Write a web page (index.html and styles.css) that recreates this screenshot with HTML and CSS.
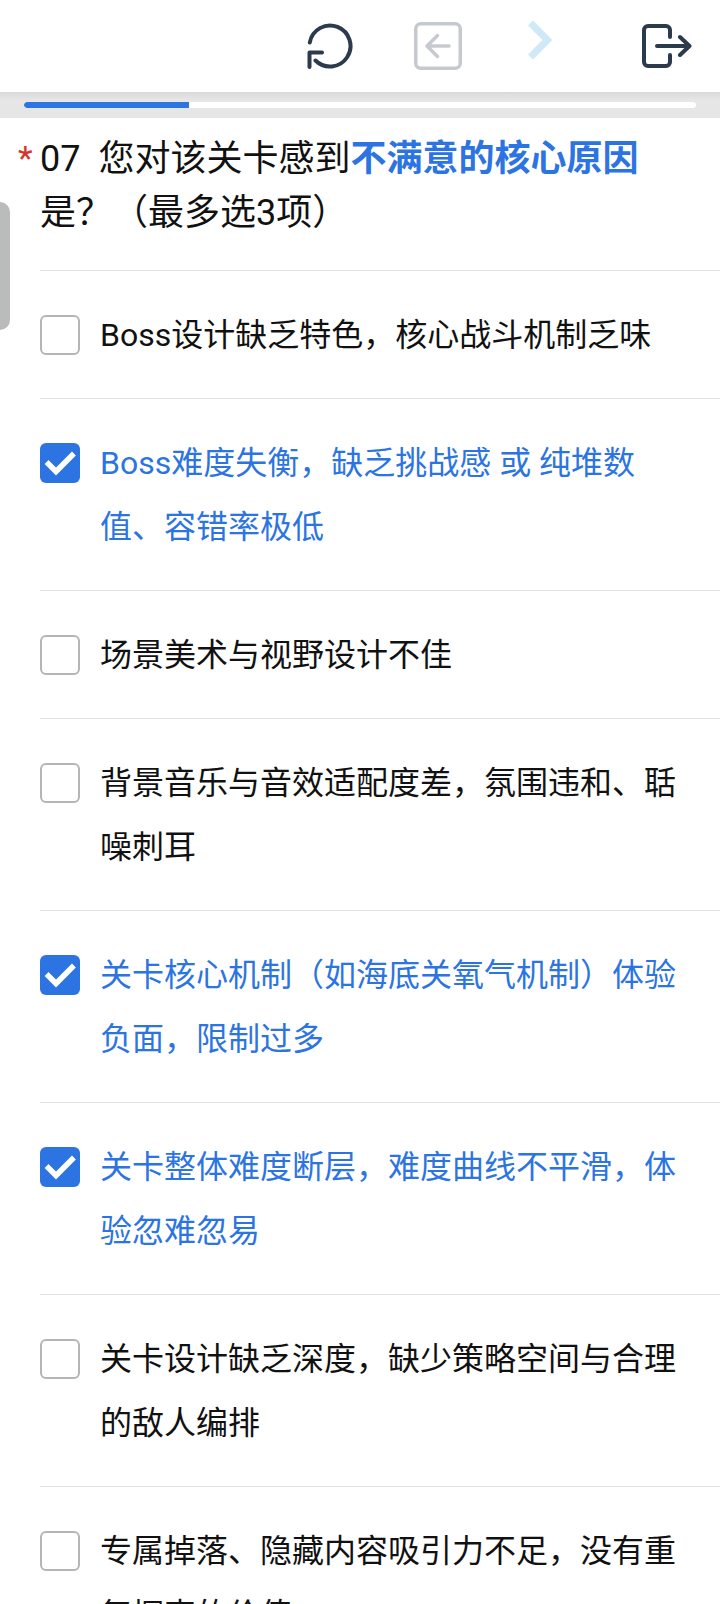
FILE: index.html
```
<!DOCTYPE html>
<html lang="zh">
<head>
<meta charset="utf-8">
<title>问卷</title>
<link rel="stylesheet" href="styles.css">
</head>
<body>
<header class="toolbar">
  <svg class="tool tool-reload" viewBox="0 0 48 48" width="48" height="48"><path d="M3.800 20.500A20.500 20.500 0 1 1 9.500 38.500M3.500 45V30.500H16"/></svg>
  <svg class="tool tool-back" viewBox="0 0 48 48" width="48" height="48"><rect x="1.750" y="1.750" width="44.500" height="44.500" rx="5"/><path d="M35 24H14M23.500 13.500 13 24 23.500 34.500"/></svg>
  <svg class="tool tool-next" viewBox="0 0 28 42" width="28" height="42"><path d="M4.500 4 21.500 21 4.500 38"/></svg>
  <svg class="tool tool-exit" viewBox="0 0 50 48" width="50" height="48"><path d="M28 15V8a4 4 0 0 0-4-4H6a4 4 0 0 0-4 4V40a4 4 0 0 0 4 4H24a4 4 0 0 0 4-4V33M15 24H47.500M38 15l9.500 9-9.500 9"/></svg>
</header>
<div class="progress-band">
  <div class="progress-track"><div class="progress-fill" style="width:24.5%"></div></div>
</div>
<main class="survey">
  <div class="side-handle"></div>
  <h1 class="question"><span class="required">*</span><span class="qno">07</span>您对该关卡感到<strong class="hl">不满意的核心原因</strong>是？（最多选3项）</h1>
  <ul class="options">
    <li class="option"><span class="box"></span><span class="label">Boss设计缺乏特色，核心战斗机制乏味</span></li>
    <li class="option on"><span class="box"><svg viewBox="0 0 40 40" width="40" height="40"><path d="M8.500 21 16 28.500 32 12.500"/></svg></span><span class="label">Boss难度失衡，缺乏挑战感 或 纯堆数值、容错率极低</span></li>
    <li class="option"><span class="box"></span><span class="label">场景美术与视野设计不佳</span></li>
    <li class="option"><span class="box"></span><span class="label">背景音乐与音效适配度差，氛围违和、聒噪刺耳</span></li>
    <li class="option on"><span class="box"><svg viewBox="0 0 40 40" width="40" height="40"><path d="M8.500 21 16 28.500 32 12.500"/></svg></span><span class="label">关卡核心机制（如海底关氧气机制）体验负面，限制过多</span></li>
    <li class="option on"><span class="box"><svg viewBox="0 0 40 40" width="40" height="40"><path d="M8.500 21 16 28.500 32 12.500"/></svg></span><span class="label">关卡整体难度断层，难度曲线不平滑，体验忽难忽易</span></li>
    <li class="option"><span class="box"></span><span class="label">关卡设计缺乏深度，缺少策略空间与合理的敌人编排</span></li>
    <li class="option"><span class="box"></span><span class="label">专属掉落、隐藏内容吸引力不足，没有重复探索的价值</span></li>
  </ul>
</main>
</body>
</html>
```
FILE: styles.css
```
* { box-sizing: border-box; }
html, body { margin: 0; padding: 0; height: 1604px; overflow: hidden; background: #fff; }
body { font-family: Roboto, "Noto Sans CJK SC", sans-serif; color: #111; }
.toolbar { height: 92px; display: flex; align-items: center; padding-left: 306px; background: #fff; }
.tool { fill: none; stroke-linecap: round; stroke-linejoin: round; flex: none; }
.tool-reload { stroke: #2c3a4e; stroke-width: 4; }
.tool-back { stroke: #c6cad0; stroke-width: 3.500; margin-left: 60px; }
.tool-next { stroke: #cfe9f6; stroke-width: 7; margin-left: 64px; margin-top: -12px; stroke-linecap: butt; stroke-linejoin: miter; }
.tool-exit { stroke: #2c3a4e; stroke-width: 4; margin-left: 88px; }
.progress-band { height: 26px; padding: 10px 24px 0; background: linear-gradient(#d9d9d9, #e6e6e6 30%, #e6e6e6); }
.progress-track { height: 6px; width: 672px; background: #fff; border-radius: 3px; overflow: hidden; }
.progress-fill { height: 100%; background: #2b74e2; border-radius: 3px 0 0 3px; }
.survey { position: relative; }
.side-handle { position: absolute; left: 0; top: 84px; width: 10px; height: 128px; background: #b9bcbb; border-radius: 0 10px 10px 0; }
.question { position: relative; margin: 0; padding: 14px 60px 30px 40px; font-size: 36px; font-weight: 400; line-height: 54px; }
.required { position: absolute; left: 18px; top: 13px; color: #d9332b; font-size: 34px; line-height: 54px; }
.qno { font-size: 36px; margin-right: 18px; }
.hl { color: #2b74e2; font-weight: 700; }
.options { list-style: none; margin: 0; padding: 0 0 0 40px; }
.option { display: flex; align-items: flex-start; gap: 20px; padding: 32px 40px 31px 0; border-top: 1px solid #e4e4e4; font-size: 32px; line-height: 64px; }
.box { flex: none; width: 40px; height: 40px; margin-top: 12px; border: 2px solid #b5b5b5; border-radius: 6px; background: #fff; }
.label { flex: 1; }
.on .box { border: 0; background: #2b74e2; }
.on .box svg { display: block; fill: none; stroke: #fff; stroke-width: 5.500; stroke-linecap: square; }
.on .label { color: #2b74e2; }
```
